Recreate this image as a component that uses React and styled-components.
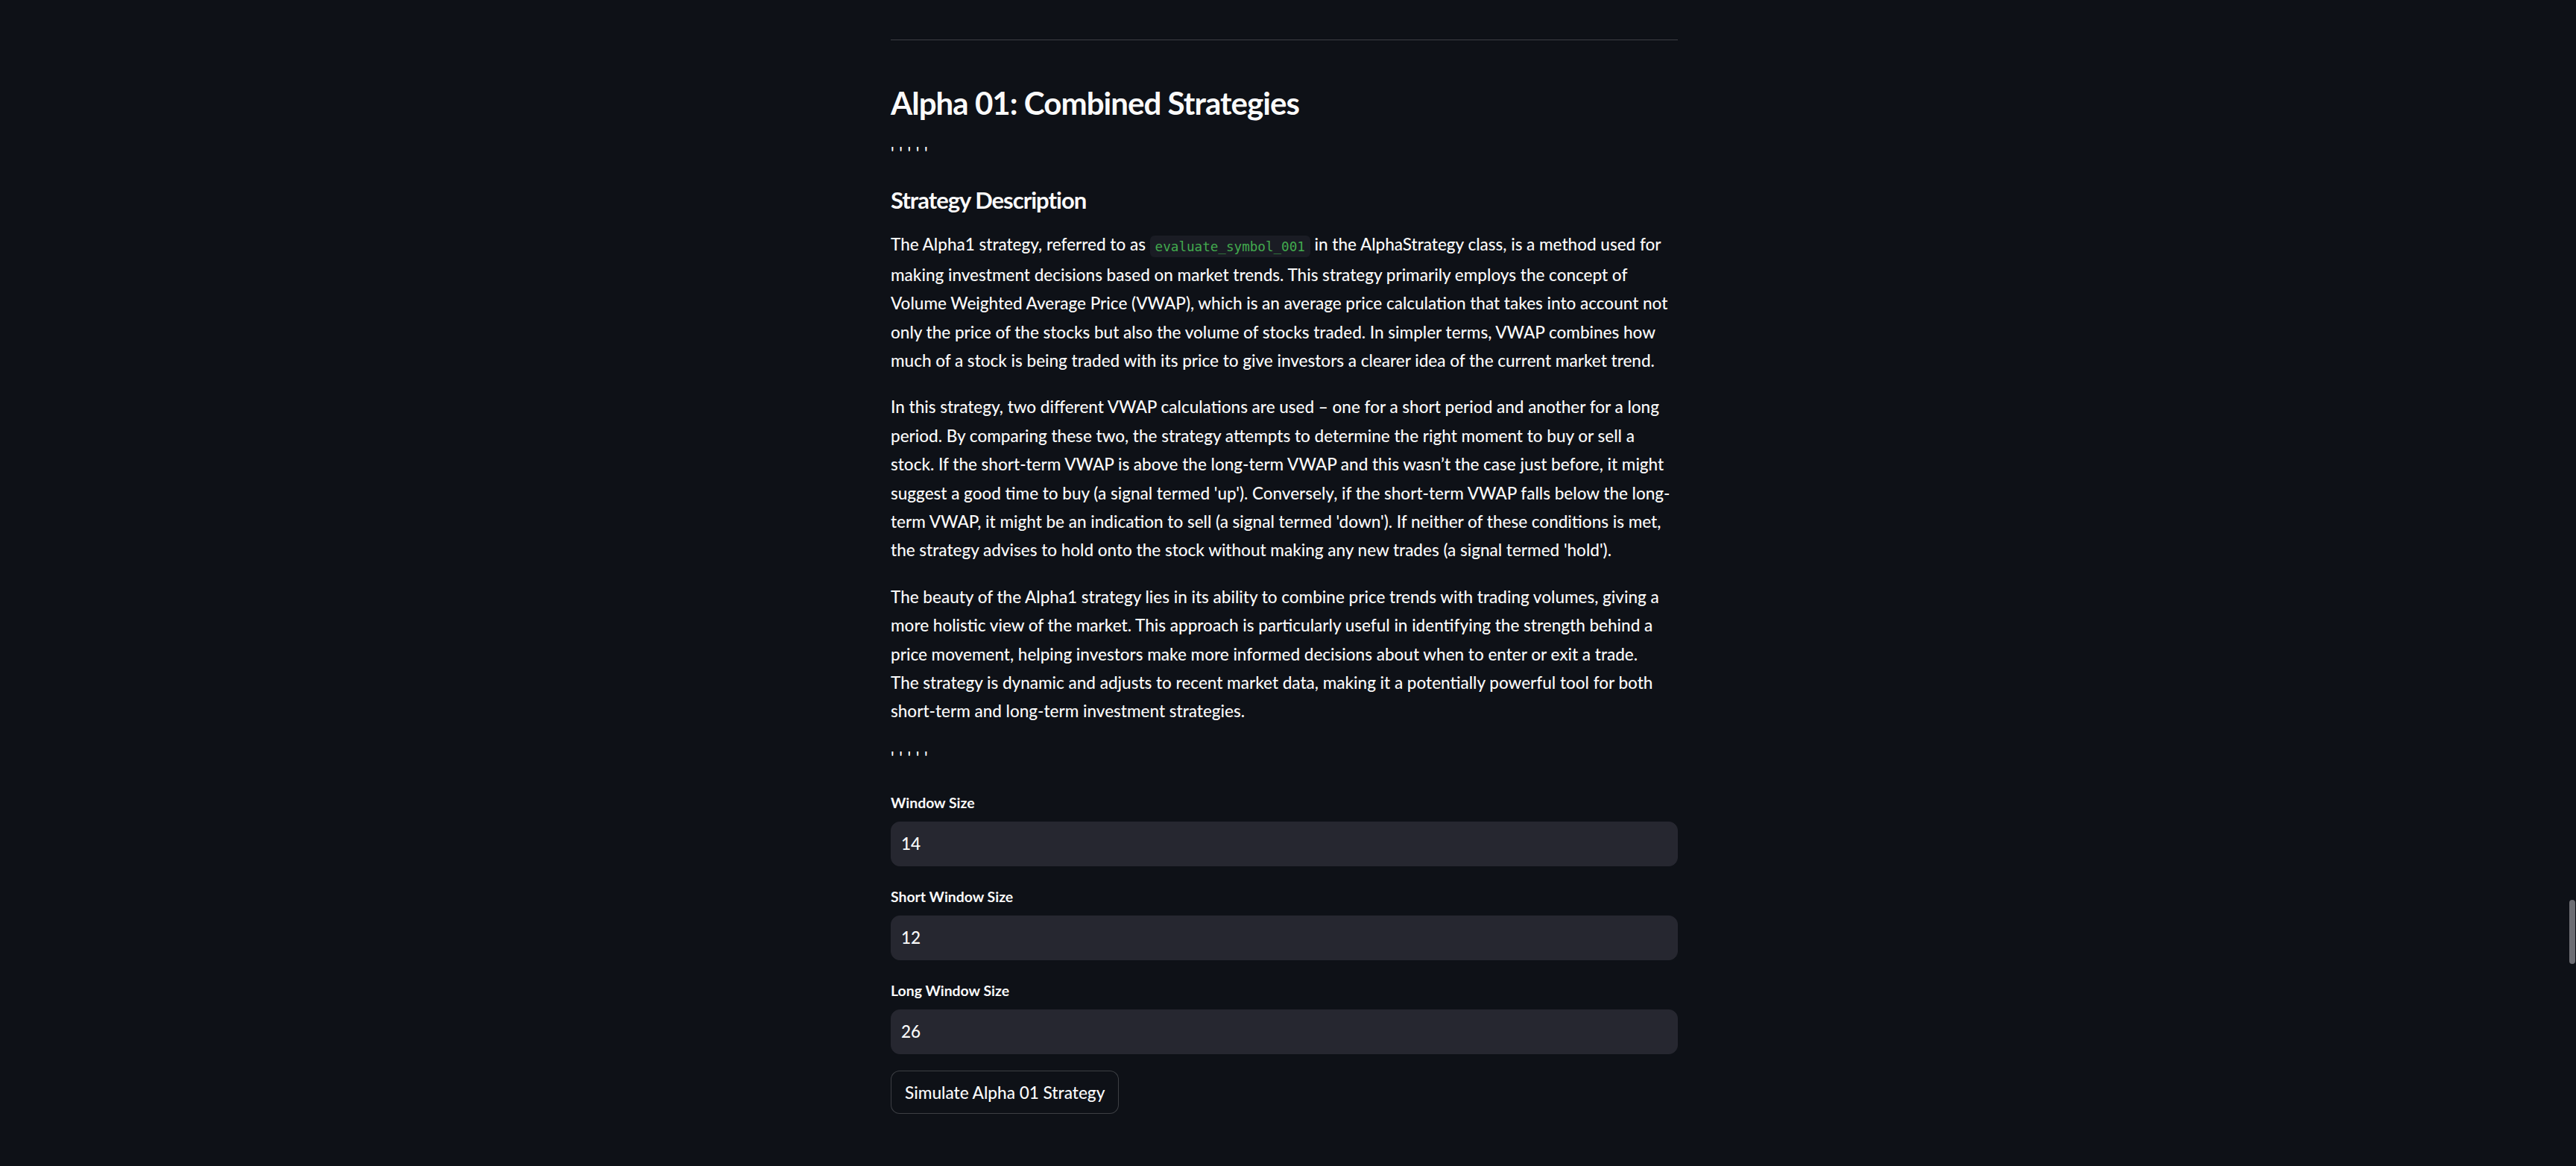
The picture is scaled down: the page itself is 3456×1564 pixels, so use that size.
import React from "react";
import styled, { createGlobalStyle } from "styled-components";

const GlobalStyle = createGlobalStyle`
  html, body {
    margin: 0;
    padding: 0;
    background: #0e1117;
  }
  body {
    min-height: 1564px;
    overflow: hidden;
    font-family: Lato, "Noto Sans", sans-serif;
    color: #fafafa;
  }
  * { box-sizing: border-box; }
`;

const Page = styled.main`
  display: flex;
  justify-content: center;
  padding: 53px 10px 0 0;
  min-height: 1564px;
`;

const Column = styled.div`
  width: 1056px;
  display: flex;
  flex-direction: column;
`;

const Divider = styled.hr`
  margin: 0;
  border: none;
  height: 1px;
  background: rgba(250, 250, 250, 0.2);
`;

const Title = styled.h2`
  margin: 59px 0 0;
  font-family: Lato, sans-serif;
  font-weight: 700;
  font-size: 42px;
  line-height: 51.6px;
  letter-spacing: -0.95px;
`;

const Markdown = styled.div`
  margin-top: ${(p) => p.$top}px;
  font-size: 22.5px;
  font-weight: 500;
  line-height: 38.4px;
`;

const Quotes = styled.p`
  margin: 0;
  letter-spacing: 6.6px;
`;

const SubHeading = styled.h3`
  margin: 23.8px 0 0;
  font-weight: 700;
  font-size: 31px;
  line-height: 38.4px;
  letter-spacing: -1px;
`;

const Paragraph = styled.p`
  margin: ${(p) => p.$top}px 0 0;
`;

const Line = styled.span`
  display: block;
  white-space: nowrap;
`;

const Code = styled.code`
  font-family: "DejaVu Sans Mono", "Liberation Mono", monospace;
  font-size: 17.6px;
  font-weight: 400;
  letter-spacing: 0;
  color: #42aa4e;
  background: #1a1c24;
  border-radius: 6px;
  padding: 4.7px 7px;
`;

const Field = styled.div`
  margin-top: ${(p) => p.$top}px;
  display: flex;
  flex-direction: column;
`;

const Label = styled.label`
  font-size: 19.4px;
  font-weight: 700;
  line-height: 33.6px;
  margin-bottom: 8.4px;
`;

const Input = styled.input`
  height: 60px;
  width: 100%;
  border: 1px solid #262730;
  border-radius: 12px;
  background: #262730;
  color: #fafafa;
  font-family: Lato, sans-serif;
  font-size: 22.5px;
  font-weight: 500;
  padding: 0 13px;
  outline: none;
`;

const Button = styled.button`
  align-self: flex-start;
  margin-top: 22.5px;
  height: 57.6px;
  padding: 0 18px;
  border: 1px solid rgba(250, 250, 250, 0.2);
  border-radius: 12px;
  background: #0e1117;
  color: #fafafa;
  font-family: Lato, sans-serif;
  font-size: 22.6px;
  font-weight: 500;
  cursor: pointer;
`;

const ScrollThumb = styled.div`
  position: fixed;
  top: 1207px;
  right: 1px;
  width: 8px;
  height: 86px;
  border-radius: 4px;
  background: #6c6d73;
`;

const para1 = [
  "making investment decisions based on market trends. This strategy primarily employs the concept of",
  "Volume Weighted Average Price (VWAP), which is an average price calculation that takes into account not",
  "only the price of the stocks but also the volume of stocks traded. In simpler terms, VWAP combines how",
  "much of a stock is being traded with its price to give investors a clearer idea of the current market trend.",
];

const para2 = [
  "In this strategy, two different VWAP calculations are used – one for a short period and another for a long",
  "period. By comparing these two, the strategy attempts to determine the right moment to buy or sell a",
  "stock. If the short-term VWAP is above the long-term VWAP and this wasn’t the case just before, it might",
  "suggest a good time to buy (a signal termed 'up'). Conversely, if the short-term VWAP falls below the long-",
  "term VWAP, it might be an indication to sell (a signal termed 'down'). If neither of these conditions is met,",
  "the strategy advises to hold onto the stock without making any new trades (a signal termed 'hold').",
];

const para3 = [
  "The beauty of the Alpha1 strategy lies in its ability to combine price trends with trading volumes, giving a",
  "more holistic view of the market. This approach is particularly useful in identifying the strength behind a",
  "price movement, helping investors make more informed decisions about when to enter or exit a trade.",
  "The strategy is dynamic and adjusts to recent market data, making it a potentially powerful tool for both",
  "short-term and long-term investment strategies.",
];

const fields = [
  { label: "Window Size", value: "14", top: 23.5 },
  { label: "Short Window Size", value: "12", top: 24 },
  { label: "Long Window Size", value: "26", top: 24 },
];

export default function App() {
  return (
    <>
      <GlobalStyle />
      <Page>
        <Column>
          <Divider />
          <Title>Alpha 01: Combined Strategies</Title>
          <Markdown $top={22.2}>
            <Quotes>'''''</Quotes>
            <SubHeading>Strategy Description</SubHeading>
            <Paragraph $top={22}>
              <Line>
                The Alpha1 strategy, referred to as <Code>evaluate_symbol_001</Code> in the
                AlphaStrategy class, is a method used for
              </Line>
              {para1.map((l) => (
                <Line key={l}>{l}</Line>
              ))}
            </Paragraph>
            <Paragraph $top={24}>
              {para2.map((l) => (
                <Line key={l}>{l}</Line>
              ))}
            </Paragraph>
            <Paragraph $top={24}>
              {para3.map((l) => (
                <Line key={l}>{l}</Line>
              ))}
            </Paragraph>
            <Paragraph $top={24}>
              <Quotes as="span">'''''</Quotes>
            </Paragraph>
          </Markdown>
          {fields.map((f) => (
            <Field key={f.label} $top={f.top}>
              <Label>{f.label}</Label>
              <Input type="text" defaultValue={f.value} readOnly />
            </Field>
          ))}
          <Button>Simulate Alpha 01 Strategy</Button>
        </Column>
      </Page>
      <ScrollThumb />
    </>
  );
}
